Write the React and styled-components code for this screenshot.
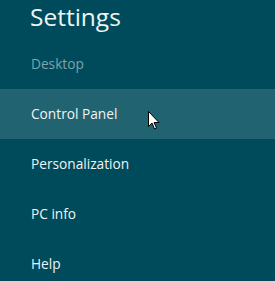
import React from 'react';
import styled, { createGlobalStyle } from 'styled-components';

const GlobalStyle = createGlobalStyle`
  html, body {
    margin: 0;
    padding: 0;
    background: #004b5b;
  }
  body {
    font-family: "Segoe UI", "Open Sans", "Noto Sans", sans-serif;
  }
`;

const Pane = styled.div`
  width: 275px;
  height: 281px;
  background: #004b5b;
  color: #eef4f5;
  overflow: hidden;
`;

const Title = styled.h1`
  margin: 0;
  padding: 0 0 0 30px;
  height: 39px;
  font-size: 24.5px;
  font-weight: 400;
  line-height: 34px;
`;

const Item = styled.div`
  height: 50px;
  box-sizing: border-box;
  display: flex;
  align-items: center;
  padding: 0 0 2px 31px;
  font-size: 13.7px;
  color: ${p => (p.$muted ? '#7fa2ab' : '#eef4f5')};
  background: ${p => (p.$active ? '#226371' : 'transparent')};
  position: relative;
`;

const Cursor = styled.svg`
  position: absolute;
  left: 148px;
  top: 22px;
`;

const items = ['Control Panel', 'Personalization', 'PC info', 'Help'];

export default function App() {
  return (
    <>
      <GlobalStyle />
      <Pane>
        <Title>Settings</Title>
        <Item $muted>Desktop</Item>
        {items.map((label, i) => (
          <Item key={label} $active={i === 0}>
            {label}
            {i === 0 && (
              <Cursor width="12" height="19" viewBox="0 0 12 19">
                <path
                  d="M0.5 0.5 L0.5 15.5 L4 12 L6.5 18 L8.5 17 L6 11.5 L11 11.5 Z"
                  fill="#fff"
                  stroke="#000"
                  strokeWidth="1"
                />
              </Cursor>
            )}
          </Item>
        ))}
      </Pane>
    </>
  );
}
